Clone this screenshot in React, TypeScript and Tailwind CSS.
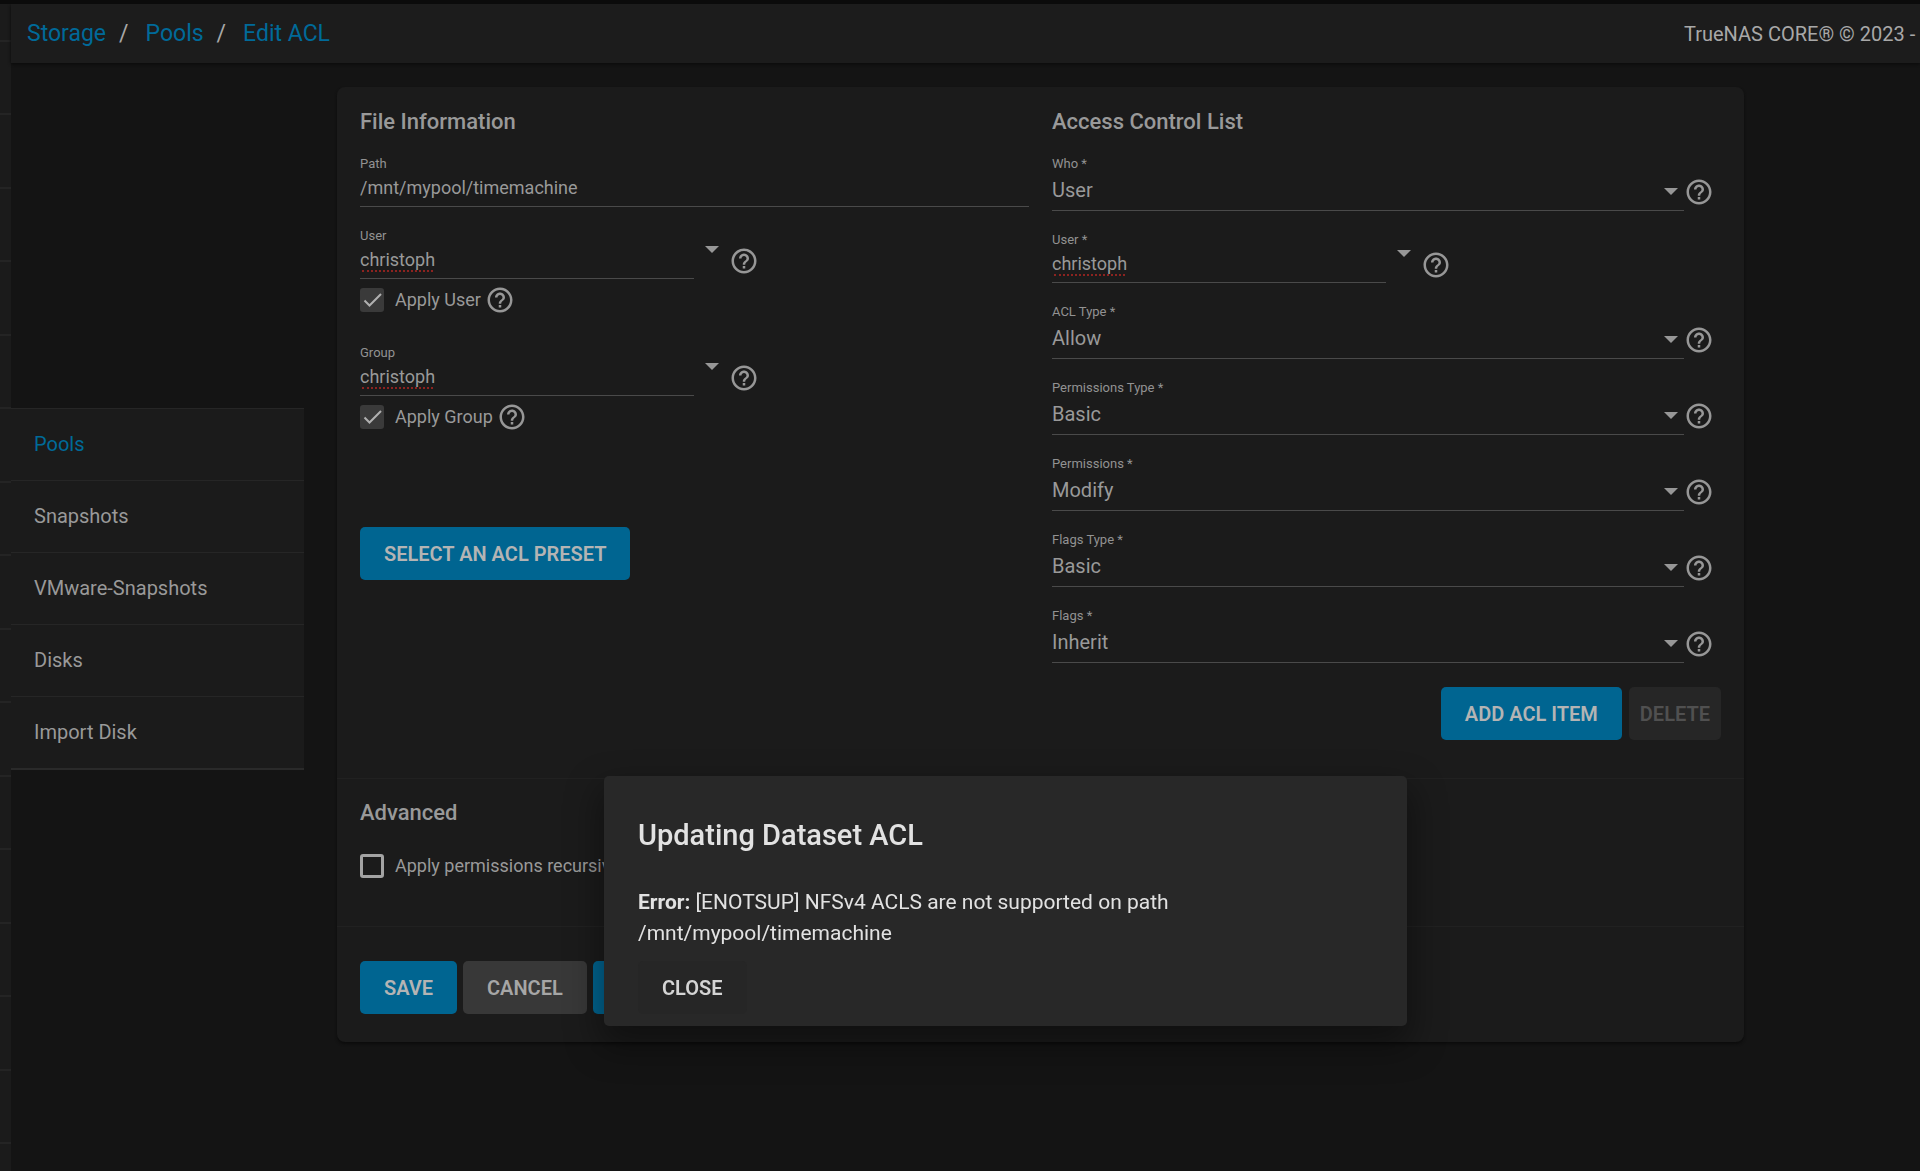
import { useId, type ReactNode } from "react";
import { MdHelpOutline } from "react-icons/md";

const BLUE_BUTTON = "bg-[#006591] text-[#b4b4b4]";
const GREY_BUTTON = "bg-[#383838] text-[#a6a6a6]";

function Help() {
  return (
    <button type="button" aria-label="Help" className="block shrink-0 text-[#979797]">
      <MdHelpOutline size={30} />
    </button>
  );
}

function Arrow() {
  return (
    <svg width="14" height="7" viewBox="0 0 14 7" className="pointer-events-none block" aria-hidden="true">
      <path d="M0 0h14L7 7z" fill="#979797" />
    </svg>
  );
}

function Heading({ children }: { children: ReactNode }) {
  return <h2 className="text-[22px] leading-7 font-medium text-[#999]">{children}</h2>;
}

function ComboField({ label, value }: { label: string; value: string }) {
  const id = useId();
  return (
    <div className="flex h-[51px]">
      <div className="relative w-1/2 pr-px">
        <label htmlFor={id} className="block text-[13px] leading-4 text-[#929292]">
          {label}
        </label>
        <input
          id={id}
          defaultValue={value}
          className="block h-[35px] w-full border-b border-[#4a4a4a] bg-transparent pb-[3px] text-lg leading-6 text-[#999] outline-none"
        />
        <span className="pointer-events-none absolute bottom-[7px] left-[2px] w-[71px] border-b-2 border-dotted border-[#8c2320]" />
      </div>
      <button type="button" aria-label={"Open " + label} className="ml-[10px] flex h-[27px] items-end pb-0.5">
        <Arrow />
      </button>
      <div className="ml-[10px] pt-[18px]">
        <Help />
      </div>
    </div>
  );
}

function SelectField({ label, value }: { label: string; value: string }) {
  const id = useId();
  return (
    <div className="flex h-[55px]">
      <div className="relative flex-1">
        <label htmlFor={id} className="block text-[13px] leading-4 text-[#929292]">
          {label}
        </label>
        <select
          id={id}
          defaultValue={value}
          className="block h-[39px] w-full appearance-none border-b border-[#4a4a4a] bg-transparent pb-[3px] text-xl leading-6 text-[#999] outline-none"
        >
          <option>{value}</option>
        </select>
        <span className="pointer-events-none absolute right-[6px] bottom-4">
          <Arrow />
        </span>
      </div>
      <div className="pt-[21px] pr-[7px]">
        <Help />
      </div>
    </div>
  );
}

function Tick({ label, checked, help }: { label: string; checked?: boolean; help?: boolean }) {
  return (
    <div className="flex h-[30px] items-center">
      <label className="flex items-center gap-[11px] text-lg whitespace-nowrap text-[#999]">
        <span className="relative block size-6">
          <input
            type="checkbox"
            defaultChecked={checked}
            className="peer block size-6 appearance-none rounded-[3px] border-3 border-[#a3a3a3] checked:border-0 checked:bg-[#3a3a3a]"
          />
          <svg
            viewBox="0 0 24 24"
            className="pointer-events-none absolute inset-0 hidden size-6 peer-checked:block"
            fill="none"
            stroke="#b0b0b0"
            strokeWidth="2"
            aria-hidden="true"
          >
            <path d="M4.5 12.5l5 5L21 6" />
          </svg>
        </span>
        {label}
      </label>
      {help && (
        <div className="ml-1">
          <Help />
        </div>
      )}
    </div>
  );
}

function Button({ tone, children }: { tone: string; children: ReactNode }) {
  return (
    <button type="button" className={"h-[53px] rounded-[5px] px-6 text-xl font-semibold whitespace-nowrap " + tone}>
      {children}
    </button>
  );
}

const SECTIONS = ["Pools", "Snapshots", "VMware-Snapshots", "Disks", "Import Disk"];
const CRUMBS = ["Storage", "Pools", "Edit ACL"];
const RAIL = Array.from({ length: 16 }, (_, i) => i);

export default function App() {
  return (
    <div className="flex h-screen overflow-hidden border-t-4 border-[#0b0b0b] bg-[#141414] font-['Roboto',sans-serif]">
      <aside className="w-[11px] shrink-0 overflow-hidden bg-[#1b1b1b] pt-9">
        {RAIL.map((i) => (
          <div key={i} className="h-[73px] border-t-2 border-[#242424] even:h-[74px]" />
        ))}
      </aside>

      <div className="flex min-w-0 flex-1 flex-col">
        <header className="flex h-[59px] shrink-0 items-center justify-between bg-[#1c1c1c] pl-4 shadow-[0_1px_3px_#0a0a0a]">
          <nav aria-label="Breadcrumb" className="flex text-[23px] leading-7">
            {CRUMBS.map((c, i) => (
              <span key={c} className="flex">
                {i > 0 && <span className="pr-[17px] pl-[13px] text-[#a8a8a8]">/</span>}
                <a href="#" className="text-[#006a99]">
                  {c}
                </a>
              </span>
            ))}
          </nav>
          <p className="w-[236px] overflow-hidden text-xl whitespace-nowrap text-[#a8a8a8]">TrueNAS CORE® © 2023 -</p>
        </header>

        <div className="flex flex-1 items-start">
          <nav aria-label="Storage" className="mt-[345px] w-[293px] shrink-0 border-b-2 border-[#2a2a2a] bg-[#1b1b1b]">
            {SECTIONS.map((s, i) => (
              <a
                key={s}
                href="#"
                className={
                  "flex h-[72px] items-center border-t border-[#262626] pb-0.5 pl-[23px] text-xl " +
                  (i === 0 ? "text-[#006a99]" : "text-[#999]")
                }
              >
                {s}
              </a>
            ))}
          </nav>

          <main className="mt-6 mr-[176px] ml-[33px] min-w-0 flex-1 rounded-lg bg-[#1b1b1b] shadow-[0_2px_3px_#0c0c0c]">
            <div className="grid grid-cols-2 gap-[23px] px-[23px] pt-[21px] pb-[38px]">
              <section>
                <Heading>File Information</Heading>
                <div className="mt-5">
                  <label htmlFor="path" className="block text-[13px] leading-4 text-[#929292]">
                    Path
                  </label>
                  <input
                    id="path"
                    defaultValue="/mnt/mypool/timemachine"
                    className="block h-[35px] w-full border-b border-[#4a4a4a] bg-transparent pb-[3px] text-lg leading-6 text-[#999] outline-none"
                  />
                </div>
                <div className="mt-[21px]">
                  <ComboField label="User" value="christoph" />
                </div>
                <div className="mt-[6px]">
                  <Tick label="Apply User" checked help />
                </div>
                <div className="mt-[30px]">
                  <ComboField label="Group" value="christoph" />
                </div>
                <div className="mt-[6px]">
                  <Tick label="Apply Group" checked help />
                </div>
                <div className="mt-[95px]">
                  <Button tone={BLUE_BUTTON}>SELECT AN ACL PRESET</Button>
                </div>
              </section>

              <section>
                <Heading>Access Control List</Heading>
                <div className="mt-5 flex flex-col gap-[21px]">
                  <SelectField label="Who *" value="User" />
                  <ComboField label="User *" value="christoph" />
                  <SelectField label="ACL Type *" value="Allow" />
                  <SelectField label="Permissions Type *" value="Basic" />
                  <SelectField label="Permissions *" value="Modify" />
                  <SelectField label="Flags Type *" value="Basic" />
                  <SelectField label="Flags *" value="Inherit" />
                </div>
                <div className="mt-6 flex justify-end gap-[7px]">
                  <Button tone={BLUE_BUTTON}>ADD ACL ITEM</Button>
                  <button type="button" disabled className="h-[53px] rounded-[5px] bg-[#262626] px-[11px] text-xl font-semibold text-[#505050]">
                    DELETE
                  </button>
                </div>
              </section>
            </div>

            <section className="border-t border-[#212121] px-[23px] pt-5 pb-[45px]">
              <Heading>Advanced</Heading>
              <div className="mt-6">
                <Tick label="Apply permissions recursively" />
              </div>
            </section>

            <div className="flex gap-[6px] border-t border-[#212121] px-[23px] pt-[34px] pb-7">
              <Button tone={BLUE_BUTTON}>SAVE</Button>
              <Button tone={GREY_BUTTON}>CANCEL</Button>
              <button type="button" aria-label="Use permissions editor" className="h-[53px] w-72 rounded-[5px] bg-[#006591]" />
            </div>
          </main>
        </div>
      </div>

      <div
        role="dialog"
        aria-modal="true"
        aria-labelledby="dialog-title"
        className="fixed top-[776px] left-[604px] w-[803px] rounded-[5px] bg-[#282828] px-[34px] pt-[41px] pb-3 text-[#e2e2e2] shadow-[0_16px_35px_4px_rgba(0,0,0,0.4)]"
      >
        <h1 id="dialog-title" className="text-[29px] leading-9 font-medium">
          Updating Dataset ACL
        </h1>
        <p className="mt-[34px] w-[560px] text-[21px] leading-[31px]">
          <b>Error:</b> [ENOTSUP] NFSv4 ACLS are not supported on path /mnt/mypool/timemachine
        </p>
        <div className="mt-3">
          <Button tone="bg-[#262626] text-[#d4d4d4]">CLOSE</Button>
        </div>
      </div>
    </div>
  );
}
